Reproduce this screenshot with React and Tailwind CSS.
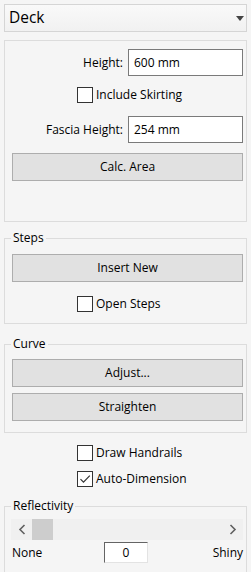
import { useState } from 'react'

const Checkbox = ({ label, checked }) => (
  <label className="flex items-center h-[16px] pl-[72px]">
    <span className="w-[16px] h-[16px] border border-[#333333] bg-white flex items-center justify-center">
      {checked && (
        <svg width="14" height="14" viewBox="0 0 14 14">
          <path d="M2.5 7.2 L5.5 10.2 L11.8 3.6" fill="none" stroke="#333333" strokeWidth="1.2" />
        </svg>
      )}
    </span>
    <span className="ml-[3px] leading-[16px]">{label}</span>
  </label>
)

const Button = ({ children, className = '' }) => (
  <button className={`h-[28px] w-full bg-[#e1e1e1] border border-[#adadad] text-[12px] leading-none ${className}`}>
    {children}
  </button>
)

const Field = ({ label, value }) => (
  <div className="flex items-center">
    <span className="flex-1 text-right pr-[5px]">{label}</span>
    <div className="w-[115px] h-[27px] bg-white border border-[#7a7a7a] flex items-center pl-[5px] mr-[3px]">
      {value}
    </div>
  </div>
)

const Group = ({ title, children, className = '' }) => (
  <fieldset className={`border border-[#dcdcdc] ${className}`}>
    <legend className="ml-[6px] px-[2px] leading-[16px]">{title}</legend>
    {children}
  </fieldset>
)

export default function App() {
  const [reflect] = useState(0)

  return (
    <div className="w-[251px] h-[572px] overflow-hidden bg-[#f5f5f5] pt-[4px] px-[4px] text-[12px] text-black font-['Open_Sans',sans-serif]">
      <div className="h-[28px] border border-[#d5d5d5] bg-gradient-to-b from-[#f9f9f9] to-[#f1f1f1] flex items-center justify-between pl-[4px] pr-[2px]">
        <span className="text-[15.5px] leading-none">Deck</span>
        <svg width="8" height="6" viewBox="0 0 8 6" className="mt-[2px]">
          <path d="M0 0 H8 L4 5 Z" fill="#444444" />
        </svg>
      </div>

      <div className="mt-[8px] h-[182px] border border-[#dcdcdc] pt-[8px] flex flex-col">
        <Field label="Height:" value="600 mm" />
        <div className="mt-[11px]">
          <Checkbox label="Include Skirting" />
        </div>
        <div className="mt-[13px]">
          <Field label="Fascia Height:" value="254 mm" />
        </div>
        <div className="mt-[10px] pl-[7px] pr-[3px]">
          <Button>Calc. Area</Button>
        </div>
      </div>

      <Group title="Steps" className="mt-[8px] pb-[11px]">
        <div className="mt-[8px] pl-[7px] pr-[3px]">
          <Button>Insert New</Button>
        </div>
        <div className="mt-[14px]">
          <Checkbox label="Open Steps" />
        </div>
      </Group>

      <Group title="Curve" className="mt-[12px] pb-[11px]">
        <div className="mt-[7px] pl-[7px] pr-[3px] flex flex-col gap-[6px]">
          <Button>Adjust...</Button>
          <Button>Straighten</Button>
        </div>
      </Group>

      <div className="mt-[12px] pl-[1px]">
        <Checkbox label="Draw Handrails" />
      </div>
      <div className="mt-[10px] pl-[1px]">
        <Checkbox label="Auto-Dimension" checked />
      </div>

      <Group title="Reflectivity" className="mt-[11px] h-[100px]">
        <div className="mt-[5px] ml-[6px] mr-[3px] h-[21px] bg-[#f0f0f0] flex items-center">
          <div className="w-[21px] h-full flex items-center justify-center">
            <svg width="8" height="11" viewBox="0 0 8 11">
              <path d="M6.5 1 L2 5.5 L6.5 10" fill="none" stroke="#606060" strokeWidth="1.6" />
            </svg>
          </div>
          <div className="w-[21px] h-full bg-[#cdcdcd]" style={{ marginLeft: reflect }} />
          <div className="flex-1" />
          <div className="w-[21px] h-full flex items-center justify-center">
            <svg width="8" height="11" viewBox="0 0 8 11">
              <path d="M1.5 1 L6 5.5 L1.5 10" fill="none" stroke="#606060" strokeWidth="1.6" />
            </svg>
          </div>
        </div>
        <div className="mt-[2px] ml-[7px] mr-[3px] grid grid-cols-[1fr_auto_1fr] items-center">
          <span>None</span>
          <div className="w-[44px] h-[21px] bg-white border-t border-l border-t-[#646464] border-l-[#646464] border-b border-r border-b-[#e3e3e3] border-r-[#e3e3e3] flex items-center justify-center mr-[3px]">
            {reflect}
          </div>
          <span className="text-right">Shiny</span>
        </div>
      </Group>
    </div>
  )
}
